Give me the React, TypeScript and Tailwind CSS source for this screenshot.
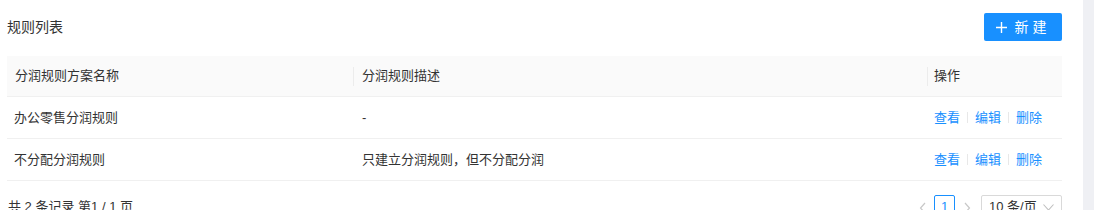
import React from "react";

const rows = [
  { name: "办公零售分润规则", desc: "-" },
  { name: "不分配分润规则", desc: "只建立分润规则，但不分配分润" },
];

function Ops() {
  return (
    <div className="flex items-center text-[13px] text-[#1890ff]">
      <span>查看</span>
      <span className="mx-[7px] h-[11px] w-px bg-[#e8e8e8]" />
      <span>编辑</span>
      <span className="mx-[7px] h-[11px] w-px bg-[#e8e8e8]" />
      <span>删除</span>
    </div>
  );
}

export default function App() {
  return (
    <div
      className="flex h-[210px] w-full overflow-hidden bg-white text-[#333]"
      style={{ fontFamily: '"Liberation Sans", "Noto Sans CJK SC", sans-serif' }}
    >
      <div className="flex-1 pl-[7px] pr-[21px] pt-[13px]">
        <div className="flex h-[28px] items-center justify-between">
          <div className="text-[14px] text-[#333]">规则列表</div>
          <button className="flex h-[28px] w-[78px] items-center justify-center gap-[8px] rounded-[2px] bg-[#1890ff] text-[14px] text-white">
            <svg width="11" height="11" viewBox="0 0 11 11" fill="none" stroke="white" strokeWidth="1.4">
              <path d="M5.5 0v11M0 5.5h11" />
            </svg>
            <span className="tracking-[4px]">新建</span>
          </button>
        </div>

        <div className="mt-[15px] text-[13px]">
          <div className="grid h-[41px] grid-cols-[347px_574px_1fr] border-b border-[#f0f0f0] bg-[#fafafa]">
            <div className="relative flex items-center px-[8px]">
              分润规则方案名称
              <span className="absolute right-0 top-[11px] h-[19px] w-px bg-[#ececec]" />
            </div>
            <div className="relative flex items-center px-[8px]">
              分润规则描述
              <span className="absolute right-0 top-[11px] h-[19px] w-px bg-[#ececec]" />
            </div>
            <div className="flex items-center px-[6px]">操作</div>
          </div>
          {rows.map((r) => (
            <div
              key={r.name}
              className="grid h-[42px] grid-cols-[347px_574px_1fr] border-b border-[#f0f0f0]"
            >
              <div className="flex items-center px-[7px]">{r.name}</div>
              <div className="flex items-center px-[8px]">{r.desc}</div>
              <div className="flex items-center px-[6px]">
                <Ops />
              </div>
            </div>
          ))}
        </div>

        <div className="mt-[14px] flex h-[24px] items-start justify-between text-[13px]">
          <div className="pt-[2px] pl-px">共 2 条记录 第1 / 1 页</div>
          <div className="flex items-start">
            <svg className="mt-[7px]" width="8" height="12" viewBox="0 0 8 12" fill="none" stroke="#c8c8c8" strokeWidth="1.2">
              <path d="M6 1L1.5 6L6 11" />
            </svg>
            <div className="ml-[7px] flex h-[24px] w-[21px] items-center justify-center rounded-[2px] border border-[#1890ff] text-[#1890ff]">
              1
            </div>
            <svg className="ml-[8px] mt-[7px]" width="8" height="12" viewBox="0 0 8 12" fill="none" stroke="#c8c8c8" strokeWidth="1.2">
              <path d="M2 1L6.5 6L2 11" />
            </svg>
            <div className="ml-[10px] flex h-[24px] w-[81px] items-center justify-between rounded-[2px] border border-[#d9d9d9] pl-[7px] pr-[7px]">
              <span>10 条/页</span>
              <svg width="11" height="7" viewBox="0 0 11 7" fill="none" stroke="#bfbfbf" strokeWidth="1.1">
                <path d="M0.5 0.5L5.5 6L10.5 0.5" />
              </svg>
            </div>
          </div>
        </div>
      </div>
      <div className="w-[11px] bg-[#eff0f4]" />
    </div>
  );
}
